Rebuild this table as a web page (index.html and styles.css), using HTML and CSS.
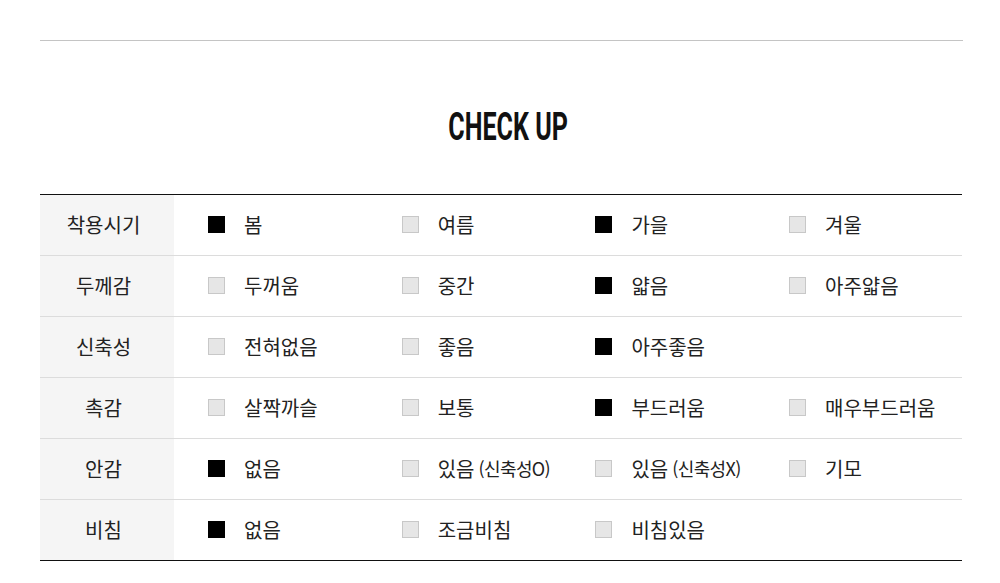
FILE: index.html
```html
<!DOCTYPE html>
<html lang="ko">
<head>
<meta charset="utf-8">
<link rel="stylesheet" href="styles.css">
</head>
<body>
<div class="page">
  <hr class="topline">
  <h2 class="title">CHECK UP</h2>
  <table class="check">
    <colgroup><col class="c-head"><col></colgroup>
    <tr>
      <th>착용시기</th>
      <td><div class="opts">
        <span class="opt"><i class="box on"></i>봄</span>
        <span class="opt"><i class="box"></i>여름</span>
        <span class="opt"><i class="box on"></i>가을</span>
        <span class="opt"><i class="box"></i>겨울</span>
      </div></td>
    </tr>
    <tr>
      <th>두께감</th>
      <td><div class="opts">
        <span class="opt"><i class="box"></i>두꺼움</span>
        <span class="opt"><i class="box"></i>중간</span>
        <span class="opt"><i class="box on"></i>얇음</span>
        <span class="opt"><i class="box"></i>아주얇음</span>
      </div></td>
    </tr>
    <tr>
      <th>신축성</th>
      <td><div class="opts">
        <span class="opt"><i class="box"></i>전혀없음</span>
        <span class="opt"><i class="box"></i>좋음</span>
        <span class="opt"><i class="box on"></i>아주좋음</span>
      </div></td>
    </tr>
    <tr>
      <th>촉감</th>
      <td><div class="opts">
        <span class="opt"><i class="box"></i>살짝까슬</span>
        <span class="opt"><i class="box"></i>보통</span>
        <span class="opt"><i class="box on"></i>부드러움</span>
        <span class="opt"><i class="box"></i>매우부드러움</span>
      </div></td>
    </tr>
    <tr>
      <th>안감</th>
      <td><div class="opts">
        <span class="opt"><i class="box on"></i>없음</span>
        <span class="opt"><i class="box"></i>있음<span class="paren">(신축성O)</span></span>
        <span class="opt"><i class="box"></i>있음<span class="paren">(신축성X)</span></span>
        <span class="opt"><i class="box"></i>기모</span>
      </div></td>
    </tr>
    <tr>
      <th>비침</th>
      <td><div class="opts">
        <span class="opt"><i class="box on"></i>없음</span>
        <span class="opt"><i class="box"></i>조금비침</span>
        <span class="opt"><i class="box"></i>비침있음</span>
      </div></td>
    </tr>
  </table>
</div>
</body>
</html>
```

FILE: styles.css
```css
html, body {
  margin: 0;
  padding: 0;
  background: #fff;
}
body {
  font-family: "Noto Sans CJK KR", "Noto Sans", sans-serif;
  color: #222;
}
.page {
  padding: 40px 37px 0 40px;
}
.topline {
  border: 0;
  border-top: 1px solid #c4c4c4;
  margin: 0;
  width: 923px;
}
.title {
  margin: 65px 0 0;
  height: 88px;
  padding-left: 20px;
  text-align: center;
  font-family: Roboto, "Liberation Sans", sans-serif;
  font-weight: 700;
  font-size: 38px;
  line-height: 42px;
  color: #111;
  letter-spacing: 0;
  transform: scaleX(0.66);
}
.check {
  border-collapse: collapse;
  table-layout: fixed;
  width: 922px;
  border-top: 1px solid #111;
  border-bottom: 1px solid #111;
}
.c-head {
  width: 134px;
}
.check tr + tr {
  border-top: 1px solid #dcdcdc;
}
.check th {
  height: 58px;
  padding: 0 7px 2px 0;
  background: #f5f5f5;
  font-weight: normal;
  font-size: 20px;
  color: #222;
  text-align: center;
}
.check td {
  padding: 0 0 2px 34px;
  height: 58px;
}
.opts {
  display: flex;
  align-items: center;
}
.opt {
  flex: none;
  width: 193.7px;
  display: flex;
  align-items: center;
  font-size: 20px;
  color: #222;
  white-space: nowrap;
}
.box {
  width: 15px;
  height: 15px;
  border: 1px solid #c8c8c8;
  background: #e6e6e6;
  margin-right: 19px;
  flex: none;
}
.box.on {
  background: #000;
  border-color: #000;
}
.paren {
  font-size: 18px;
  letter-spacing: -0.6px;
  margin-left: 4px;
}
```
